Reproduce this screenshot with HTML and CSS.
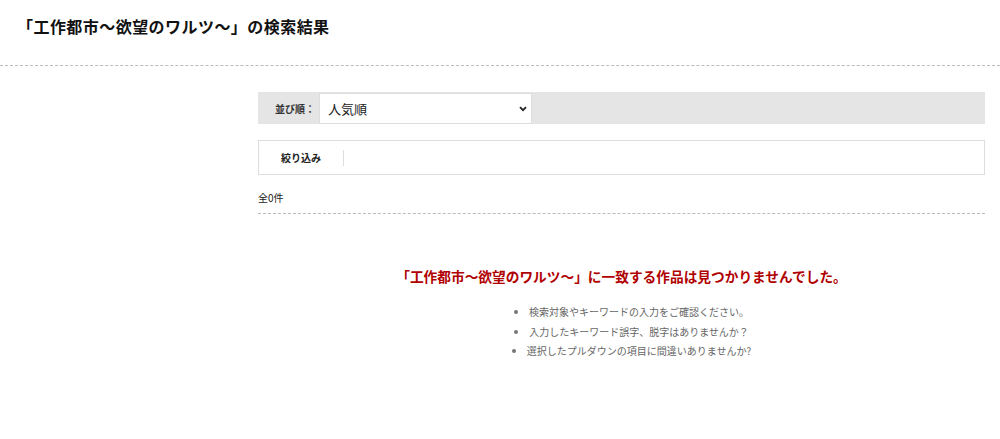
FILE: index.html
```html
<!DOCTYPE html>
<html lang="ja">
<head>
<meta charset="utf-8">
<title>検索結果</title>
<link rel="stylesheet" href="styles.css">
</head>
<body>
<header class="page-head">
  <h1 class="page-title">「工作都市～欲望のワルツ～」の検索結果</h1>
</header>
<div class="layout">
  <aside class="side"></aside>
  <main class="main">
    <div class="sort-bar">
      <span class="sort-label">並び順：</span>
      <div class="select-wrap">
        <select class="sort-select">
          <option>人気順</option>
        </select>
        <svg class="chev" width="8" height="6" viewBox="0 0 8 6"><path d="M1 1.2 L4 4.2 L7 1.2" fill="none" stroke="#222" stroke-width="1.8"/></svg>
      </div>
    </div>
    <div class="filter-box">
      <span class="filter-label">絞り込み</span>
      <span class="filter-sep"></span>
    </div>
    <div class="count">全0件</div>
    <div class="empty">
      <p class="empty-msg">「工作都市～欲望のワルツ～」に一致する作品は見つかりませんでした。</p>
      <ul class="hints">
        <li>検索対象やキーワードの入力をご確認ください。</li>
        <li>入力したキーワード誤字、脱字はありませんか？</li>
        <li>選択したプルダウンの項目に間違いありませんか?</li>
      </ul>
    </div>
  </main>
</div>
</body>
</html>
```
FILE: styles.css
```css
* { box-sizing: border-box; }
html, body { margin: 0; padding: 0; background: #fff; }
body {
  font-family: "Noto Sans CJK JP", "Noto Sans", sans-serif;
  color: #222;
}
.page-head {
  padding: 14px 17px 0;
  height: 66px;
  border-bottom: 1px dashed #bbb;
}
.page-title {
  margin: 0;
  font-size: 16px;
  line-height: 24px;
  font-weight: 700;
  color: #111;
  letter-spacing: 0.45px;
}
.layout {
  display: grid;
  grid-template-columns: 258px 727px;
}
.main {
  padding-top: 26px;
}
.sort-bar {
  display: flex;
  align-items: center;
  height: 32px;
  background: #e5e5e5;
  padding-left: 17px;
}
.sort-label {
  font-size: 10px;
  font-weight: 700;
  color: #333;
  width: 44px;
}
.select-wrap {
  position: relative;
  width: 213px;
  height: 31px;
  margin-top: 1px;
}
.sort-select {
  appearance: none;
  -webkit-appearance: none;
  width: 100%;
  height: 100%;
  border: 1px solid #ddd;
  background: #fff;
  font-family: "Noto Sans CJK JP", sans-serif;
  font-size: 13px;
  color: #222;
  padding: 0 0 0 8px;
  border-radius: 0;
}
.chev {
  position: absolute;
  right: 5px;
  top: 13px;
}
.filter-box {
  margin-top: 16px;
  height: 35px;
  border: 1px solid #ddd;
  display: flex;
  align-items: center;
  padding-left: 22px;
}
.filter-label {
  font-size: 10px;
  font-weight: 700;
  color: #222;
}
.filter-sep {
  width: 1px;
  height: 16px;
  background: #ddd;
  margin-left: 22px;
}
.count {
  margin-top: 16px;
  font-size: 10px;
  line-height: 14px;
  color: #222;
  padding-bottom: 8px;
  border-bottom: 1px dashed #bbb;
}
.empty {
  text-align: center;
  padding-top: 53px;
}
.empty-msg {
  margin: 0;
  font-size: 13.7px;
  line-height: 18px;
  font-weight: 700;
  color: #b00000;
}
.hints {
  margin: 17px 0 0;
  padding-left: 20px;
  list-style: disc inside;
  font-size: 10px;
  line-height: 19.5px;
  color: #666;
}
.hints li::marker { color: #777; }
```
